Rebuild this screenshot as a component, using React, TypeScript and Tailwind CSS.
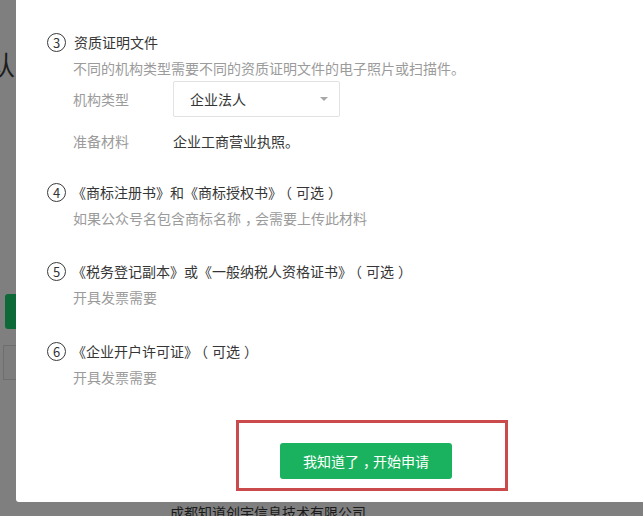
const items = [
  { n: '4', title: '《商标注册书》和《商标授权书》（可选）', desc: '如果公众号名包含商标名称，会需要上传此材料', gap: 'mt-[25px]' },
  { n: '5', title: '《税务登记副本》或《一般纳税人资格证书》（可选）', desc: '开具发票需要', gap: 'mt-[27px]' },
  { n: '6', title: '《企业开户许可证》（可选）', desc: '开具发票需要', gap: 'mt-[28px]' },
];

// the reference font draws these full-width marks centred in their box
const shift: Record<string, string> = {
  '（': 'relative left-[-4px]',
  '）': 'relative left-[4px]',
  '，': 'relative left-[4px]',
};

function T({ s }: { s: string }) {
  return (
    <>
      {s.split(/([（），])/).map((part, i) =>
        shift[part] ? (
          <span key={i} className={shift[part]}>{part}</span>
        ) : (
          part
        )
      )}
    </>
  );
}

function Num({ n }: { n: string }) {
  return (
    <span className="w-[19px] h-[19px] rounded-full border border-[#3a3a3a] flex items-center justify-center text-[13px] leading-none text-[#333] mr-[8px] shrink-0">
      {n}
    </span>
  );
}

export default function App() {
  return (
    <div className="relative w-[643px] h-[516px] overflow-hidden bg-[#7f7f7f] font-['Noto_Sans_CJK_SC','Noto_Sans',sans-serif] [text-spacing-trim:space-all]">
      {/* page behind the overlay */}
      <div className="absolute left-[-11px] top-[48px] text-[26px] leading-[32px] text-[#1d1d1d]">认</div>
      <div className="absolute left-[5px] top-[294px] w-[30px] h-[35px] rounded-[3px] bg-[#0d6a38]" />
      <div className="absolute left-[3px] top-[345px] w-[30px] h-[35px] border border-[#6e6e6e] bg-[#7d7d7d]" />
      <div className="absolute left-[170px] top-[502px] text-[14px] leading-[20px] text-[#1a1a1a]">成都知道创宇信息技术有限公司</div>

      {/* modal */}
      <div className="absolute left-[16px] top-0 right-0 h-[502px] bg-white rounded-bl-[3px] pl-[31px] pt-[29px] text-[14px] leading-[26px]">
        <div className="flex items-center text-[#353535]">
          <Num n="3" />
          <span>资质证明文件</span>
        </div>
        <div className="pl-[26px]">
          <p className="text-[#9b9b9b]">不同的机构类型需要不同的资质证明文件的电子照片或扫描件。</p>
          <div className="flex items-center">
            <span className="w-[100px] text-[#9b9b9b]">机构类型</span>
            <div className="w-[167px] h-[36px] border border-[#e2e2e2] rounded-[2px] flex items-center justify-between pl-[16px] pr-[10px] text-[#353535]">
              <span>企业法人</span>
              <svg width="8" height="4" viewBox="0 0 8 4" className="mr-[1px]">
                <path d="M0 0h8L4 4z" fill="#a8a8a8" />
              </svg>
            </div>
          </div>
          <div className="flex items-center mt-[11px]">
            <span className="w-[100px] text-[#9b9b9b]">准备材料</span>
            <span className="text-[#353535]">企业工商营业执照。</span>
          </div>
        </div>

        {items.map((it) => (
          <div key={it.n} className={it.gap}>
            <div className="flex items-center text-[#353535]">
              <Num n={it.n} />
              <span className="-ml-[2px]"><T s={it.title} /></span>
            </div>
            <p className="pl-[26px] text-[#9b9b9b]"><T s={it.desc} /></p>
          </div>
        ))}

        <button className="mt-[53px] ml-[233px] w-[172px] h-[36px] rounded-[3px] bg-[#1bb25f] text-white text-[14px]">
          <T s="我知道了，开始申请" />
        </button>
      </div>

      {/* red annotation box */}
      <div className="absolute left-[236px] top-[420px] w-[272px] h-[71px] border-[3px] border-[#cb4a4b]" />
    </div>
  );
}
